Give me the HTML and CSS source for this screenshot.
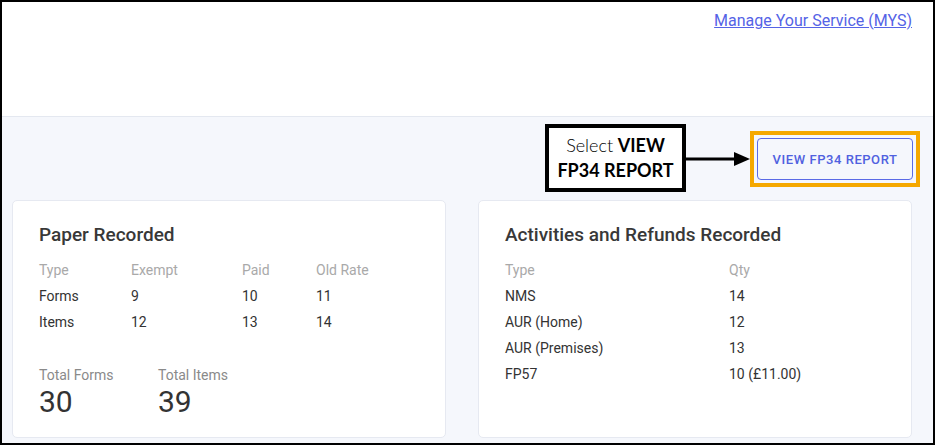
FILE: index.html
```html
<!DOCTYPE html>
<html lang="en">
<head>
<meta charset="utf-8">
<title>Dashboard</title>
<link rel="stylesheet" href="styles.css">
</head>
<body>
<div class="frame">
  <header class="topbar">
    <a class="mys-link" href="#">Manage Your Service (MYS)</a>
  </header>
  <main class="content">
    <div class="actions">
      <div class="callout"><span class="light">Select</span> <b>VIEW<br>FP34 REPORT</b></div>
      <svg class="arrow" width="64" height="14" viewBox="0 0 64 14">
        <line x1="0" y1="7" x2="50" y2="7" stroke="#000" stroke-width="3"/>
        <polygon points="48,0 64,7 48,14" fill="#000"/>
      </svg>
      <div class="highlight">
        <button class="report-btn" type="button">VIEW FP34 REPORT</button>
      </div>
    </div>
    <div class="cards">
      <section class="card">
        <h2 class="card-title">Paper Recorded</h2>
        <div class="table paper">
          <span class="th">Type</span><span class="th">Exempt</span><span class="th">Paid</span><span class="th">Old Rate</span>
          <span>Forms</span><span>9</span><span>10</span><span>11</span>
          <span>Items</span><span>12</span><span>13</span><span>14</span>
        </div>
        <div class="totals">
          <div class="total">
            <div class="total-label">Total Forms</div>
            <div class="total-value">30</div>
          </div>
          <div class="total">
            <div class="total-label">Total Items</div>
            <div class="total-value">39</div>
          </div>
        </div>
      </section>
      <section class="card">
        <h2 class="card-title">Activities and Refunds Recorded</h2>
        <div class="table activities">
          <span class="th">Type</span><span class="th">Qty</span>
          <span>NMS</span><span>14</span>
          <span>AUR (Home)</span><span>12</span>
          <span>AUR (Premises)</span><span>13</span>
          <span>FP57</span><span>10 (£11.00)</span>
        </div>
      </section>
    </div>
  </main>
</div>
</body>
</html>
```

FILE: styles.css
```css
* { box-sizing: border-box; }
html, body { margin: 0; padding: 0; }
body {
  font-family: Roboto, "Liberation Sans", sans-serif;
  color: #333;
  background: #fff;
}
.frame {
  width: 935px;
  height: 445px;
  border: 2px solid #000;
  overflow: hidden;
  display: flex;
  flex-direction: column;
  background: #f5f7fc;
}
.topbar {
  height: 115px;
  flex: none;
  background: #fff;
  border-bottom: 1px solid #e4e8f0;
  display: flex;
  justify-content: flex-end;
  align-items: flex-start;
  padding: 9px 21px 0 0;
}
.mys-link {
  font-size: 16px;
  line-height: 20px;
  color: #5563e6;
  text-decoration: underline;
}
.content {
  flex: 1;
  padding: 0 21px 0 10px;
}
.actions {
  display: flex;
  justify-content: flex-end;
  align-items: center;
  height: 83px;
  margin-right: -8px;
  padding-top: 1px;
}
.callout {
  width: 141px;
  height: 68px;
  border: 4px solid #000;
  background: #fff;
  font-family: Lato, "DejaVu Sans", sans-serif;
  font-size: 18px;
  line-height: 25px;
  text-align: center;
  color: #000;
  padding-top: 5px;
  margin-top: -2px;
}
.callout .light { font-weight: 300; }
.callout b { font-weight: 700; }
.arrow { display: block; flex: none; }
.highlight {
  width: 170px;
  height: 56px;
  border: 4px solid #f5a800;
  padding: 3px 3px;
  display: flex;
}
.report-btn {
  flex: 1;
  background: #f5f7fc;
  border: 1px solid #5a6ae6;
  border-radius: 4px;
  color: #5061e0;
  font-family: Roboto, "Liberation Sans", sans-serif;
  font-size: 13px;
  font-weight: 500;
  letter-spacing: 0.55px;
  padding: 0;
  cursor: pointer;
}
.cards {
  display: grid;
  grid-template-columns: 434px 434px;
  column-gap: 32px;
}
.card {
  background: #fff;
  border: 1px solid #e6e9f1;
  border-radius: 5px;
  height: 238px;
  padding: 22px 26px 0 26px;
}
.card-title {
  margin: 0;
  font-size: 19px;
  line-height: 24px;
  font-weight: 500;
  color: #383838;
}
.table {
  display: grid;
  margin-top: 10px;
  font-size: 14px;
  line-height: 26px;
  color: #333;
}
.table.paper { grid-template-columns: 92px 111px 74px 1fr; }
.table.activities { grid-template-columns: 224px 1fr; }
.th { color: #a9a9a9; }
.totals {
  display: flex;
  margin-top: 31px;
}
.total { width: 119px; }
.total-label {
  font-size: 14px;
  line-height: 18px;
  color: #8a8a8a;
}
.total-value {
  font-size: 30px;
  line-height: 36px;
  color: #333;
}
```
